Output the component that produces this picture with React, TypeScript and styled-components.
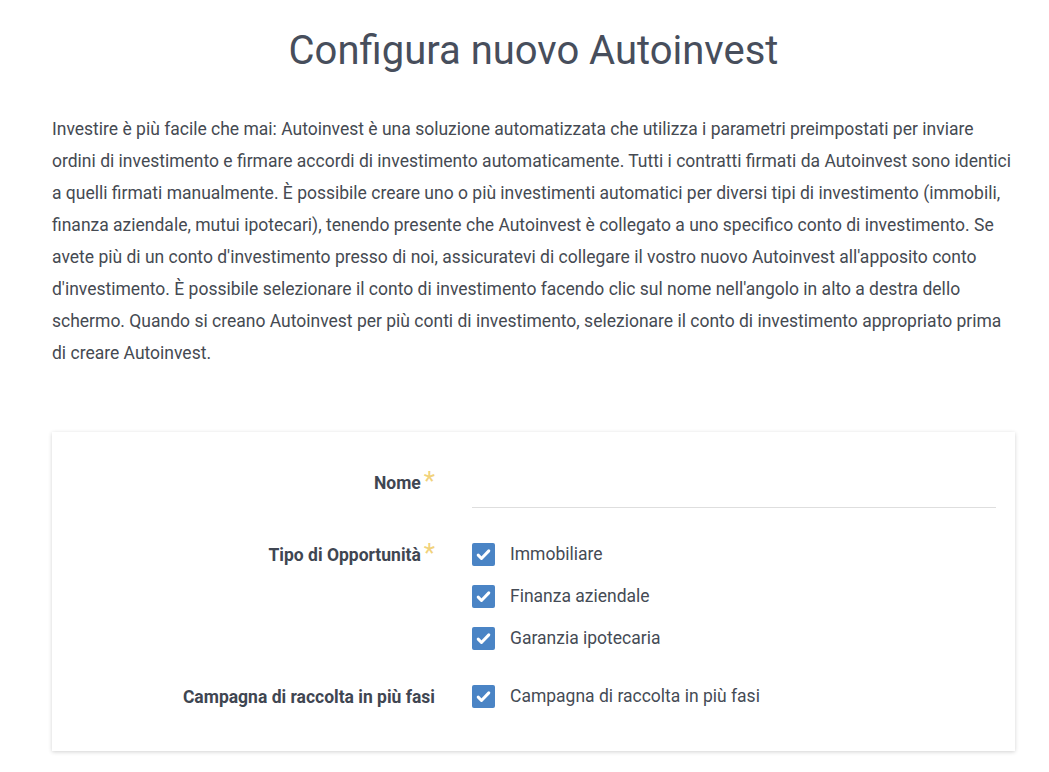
import styled, { createGlobalStyle } from "styled-components";

const GlobalStyle = createGlobalStyle`
  body {
    margin: 0;
    background: #fff;
    font-family: Roboto, "Liberation Sans", sans-serif;
    color: #484e58;
  }
`;

const Page = styled.div`
  width: 963px;
  margin-left: 52px;
  padding-bottom: 20px;
`;

const Title = styled.h1`
  margin: 27px 0 0;
  text-align: center;
  font-size: 40px;
  font-weight: 400;
  line-height: 48px;
  color: #474e5c;
`;

const Intro = styled.p`
  margin: 38px 0 0;
  font-size: 17.5px;
  line-height: 32px;
  color: #454a52;
`;

const Card = styled.div`
  margin-top: 63px;
  background: #fff;
  box-shadow: 0 1px 4px rgba(0, 0, 0, 0.18);
  padding: 39px 19px 42px 0;
  display: flex;
  flex-direction: column;
  gap: 35px;
`;

const Row = styled.div`
  display: grid;
  grid-template-columns: 383px 1fr;
  column-gap: 37px;
  align-items: start;
`;

const Label = styled.label`
  justify-self: end;
  font-size: 17.5px;
  font-weight: 700;
  color: #3f4652;
  line-height: 24px;
`;

const Star = styled.span`
  position: relative;
  top: 1px;
  margin-left: 3px;
  font-size: 26px;
  line-height: 0;
  font-weight: 400;
  color: #f1d27b;
`;

const TextInput = styled.div`
  height: 36px;
  border-bottom: 1px solid #dedede;
`;

const Options = styled.div`
  display: flex;
  flex-direction: column;
  gap: 19px;
`;

const Option = styled.div`
  display: flex;
  align-items: center;
  gap: 15px;
  font-size: 17.5px;
  color: #454b55;
  line-height: 23px;
`;

const Box = styled.span`
  width: 23px;
  height: 23px;
  border-radius: 2px;
  background: #4a84c5;
  display: inline-flex;
  align-items: center;
  justify-content: center;
`;

function Check({ text }: { text: string }) {
  return (
    <Option>
      <Box>
        <svg width="17" height="17" viewBox="0 0 16 16">
          <path d="M3 8.6l3.1 3.1L13 4.6" fill="none" stroke="#fff" strokeWidth="2.8" strokeLinecap="round" strokeLinejoin="round" />
        </svg>
      </Box>
      {text}
    </Option>
  );
}

export default function App() {
  return (
    <>
      <GlobalStyle />
      <Page>
        <Title>Configura nuovo Autoinvest</Title>
        <Intro>
          Investire è più facile che mai: Autoinvest è una soluzione automatizzata che utilizza i parametri preimpostati per inviare ordini di investimento e firmare accordi di investimento automaticamente. Tutti i contratti firmati da Autoinvest sono identici a quelli firmati manualmente. È possibile creare uno o più investimenti automatici per diversi tipi di investimento (immobili, finanza aziendale, mutui ipotecari), tenendo presente che Autoinvest è collegato a uno specifico conto di investimento. Se avete più di un conto d'investimento presso di noi, assicuratevi di collegare il vostro nuovo Autoinvest all'apposito conto d'investimento. È possibile selezionare il conto di investimento facendo clic sul nome nell'angolo in alto a destra dello schermo. Quando si creano Autoinvest per più conti di investimento, selezionare il conto di investimento appropriato prima di creare Autoinvest.
        </Intro>
        <Card>
          <Row>
            <Label>
              Nome<Star>*</Star>
            </Label>
            <TextInput />
          </Row>
          <Row>
            <Label>
              Tipo di Opportunità<Star>*</Star>
            </Label>
            <Options>
              <Check text="Immobiliare" />
              <Check text="Finanza aziendale" />
              <Check text="Garanzia ipotecaria" />
            </Options>
          </Row>
          <Row>
            <Label>Campagna di raccolta in più fasi</Label>
            <Options>
              <Check text="Campagna di raccolta in più fasi" />
            </Options>
          </Row>
        </Card>
      </Page>
    </>
  );
}
